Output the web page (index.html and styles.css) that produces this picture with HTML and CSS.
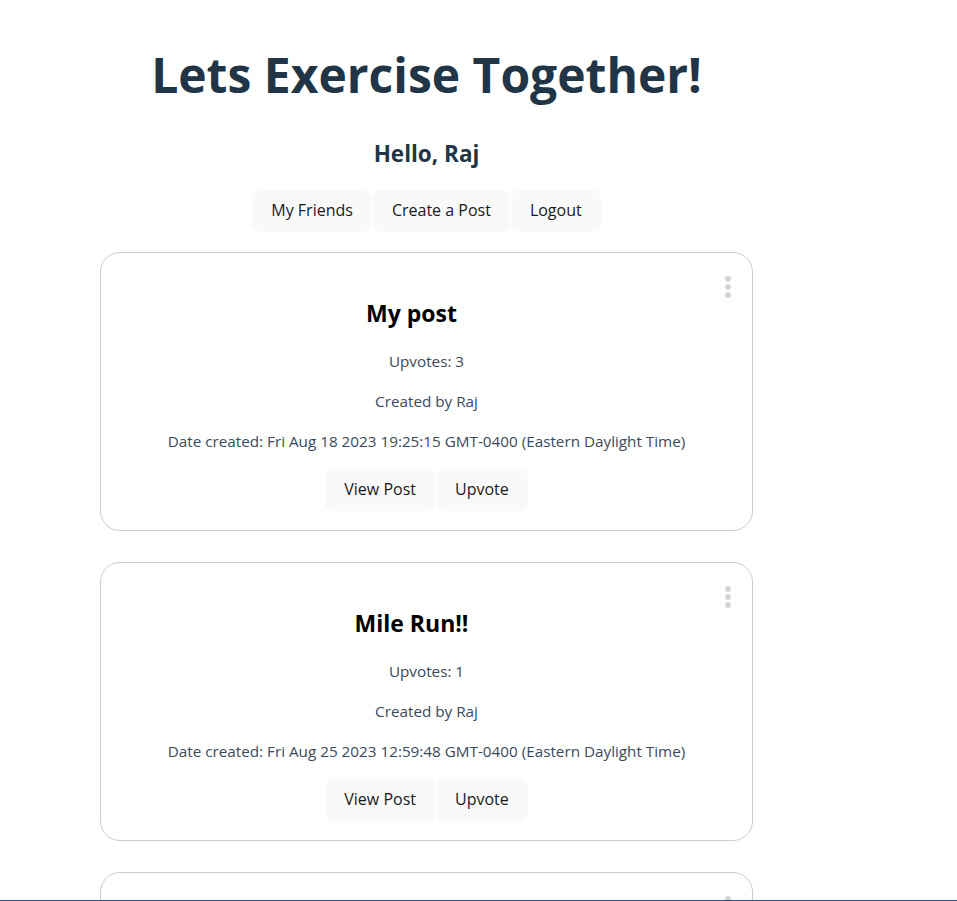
FILE: index.html
```html
<!DOCTYPE html>
<html lang="en">
<head>
<meta charset="utf-8">
<title>Lets Exercise Together!</title>
<link rel="stylesheet" href="styles.css">
</head>
<body>
<main class="page">
  <h1 class="title">Lets Exercise Together!</h1>
  <h2 class="greeting">Hello, Raj</h2>
  <nav class="btn-row nav">
    <button class="btn">My Friends</button>
    <button class="btn">Create a Post</button>
    <button class="btn">Logout</button>
  </nav>

  <section class="feed">
    <article class="card">
      <span class="menu" aria-label="More options"><i></i><i></i><i></i></span>
      <h3 class="card-title">My post</h3>
      <p class="meta">Upvotes: 3</p>
      <p class="meta">Created by Raj</p>
      <p class="meta">Date created: Fri Aug 18 2023 19:25:15 GMT-0400 (Eastern Daylight Time)</p>
      <div class="btn-row">
        <button class="btn">View Post</button>
        <button class="btn">Upvote</button>
      </div>
    </article>

    <article class="card">
      <span class="menu" aria-label="More options"><i></i><i></i><i></i></span>
      <h3 class="card-title">Mile Run!!</h3>
      <p class="meta">Upvotes: 1</p>
      <p class="meta">Created by Raj</p>
      <p class="meta">Date created: Fri Aug 25 2023 12:59:48 GMT-0400 (Eastern Daylight Time)</p>
      <div class="btn-row">
        <button class="btn">View Post</button>
        <button class="btn">Upvote</button>
      </div>
    </article>

    <article class="card">
      <span class="menu" aria-label="More options"><i></i><i></i><i></i></span>
      <h3 class="card-title">Leg Day</h3>
      <p class="meta">Upvotes: 0</p>
      <p class="meta">Created by Raj</p>
      <p class="meta">Date created: Sat Aug 26 2023 10:12:03 GMT-0400 (Eastern Daylight Time)</p>
      <div class="btn-row">
        <button class="btn">View Post</button>
        <button class="btn">Upvote</button>
      </div>
    </article>
  </section>
</main>
<div class="bottom-bar"></div>
</body>
</html>
```

FILE: styles.css
```css
* { box-sizing: border-box; }

html, body {
  margin: 0;
  background: #ffffff;
}

body {
  font-family: "Open Sans", "Noto Sans", sans-serif;
  color: #213547;
  font-size: 16px;
  line-height: 1.5;
}

.page {
  width: 653px;
  margin-left: 100px;
  padding-top: 47px;
  display: flex;
  flex-direction: column;
  align-items: center;
  text-align: center;
}

.title {
  margin: 0;
  font-size: 48px;
  line-height: 56px;
  font-weight: 700;
  color: #213547;
  white-space: nowrap;
}

.greeting {
  margin: 35px 0 0;
  font-size: 22.5px;
  line-height: 32px;
  font-weight: 700;
  color: #213547;
}

.btn-row {
  display: flex;
  justify-content: center;
  gap: 1px;
}

.nav {
  margin-top: 20px;
}

.btn {
  font-family: inherit;
  font-size: 16px;
  font-weight: 500;
  line-height: 21px;
  color: #1a1a1a;
  background: #f9f9f9;
  border: 1px solid transparent;
  border-radius: 8px;
  padding: 9px 18px 10px;
  cursor: pointer;
}

.feed {
  width: 100%;
  margin-top: 20px;
  display: flex;
  flex-direction: column;
  gap: 31px;
}

.card {
  position: relative;
  border: 1px solid #cccccc;
  border-radius: 20px;
  padding: 44px 20px 19px;
  display: flex;
  flex-direction: column;
  align-items: center;
  background: #fff;
}

.menu {
  position: absolute;
  top: 23px;
  right: 21px;
  display: flex;
  flex-direction: column;
  gap: 2px;
}

.menu i {
  display: block;
  width: 6px;
  height: 6px;
  border-radius: 50%;
  background: #d4d4d4;
}

.card-title {
  margin: 0 30px 20px 0;
  font-size: 23px;
  line-height: 32px;
  font-weight: 700;
  color: #000000;
}

.meta {
  margin: 0 0 16px;
  font-size: 15.25px;
  line-height: 24px;
  color: #3a4a5c;
}

.bottom-bar {
  position: fixed;
  left: 0;
  right: 0;
  bottom: 0;
  height: 1px;
  background: #2d4f7c;
}
```
